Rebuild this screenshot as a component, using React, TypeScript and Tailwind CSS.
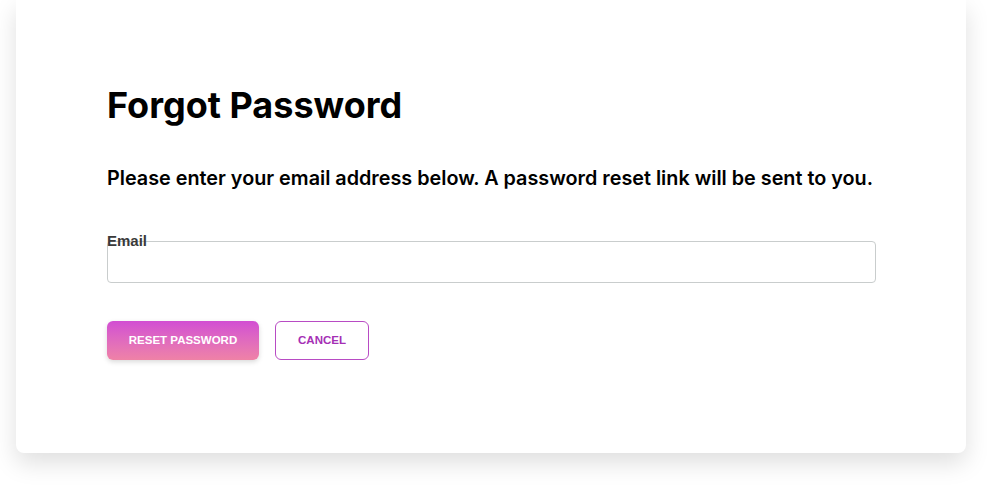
export default function App() {
  return (
    <div className="min-h-screen bg-white pl-4 pr-[21px]" style={{ fontFamily: 'Inter, "Noto Sans", sans-serif' }}>
      <div className="rounded-b-lg bg-white pl-[91px] pr-[90px] pt-[84px] pb-[93px] shadow-[0_10px_24px_rgba(0,0,0,0.13)]">
        <h1 className="text-[36px] font-bold leading-[43px] text-black">Forgot Password</h1>
        <p className="mt-[37px] whitespace-nowrap text-[19.8px] font-semibold leading-[28px] text-black">
          Please enter your email address below. A password reset link will be sent to you.
        </p>

        <div className="relative mt-[49px] h-[42px] rounded border border-[#c9cdcd]">
          <label
            className="absolute left-[-1px] top-[-9px] text-[15px] font-bold leading-4 text-[#3a3a3a]"
            style={{ fontFamily: '"Liberation Sans", Arial, sans-serif' }}
          >
            Email
          </label>
          <input className="h-full w-full bg-transparent px-3 outline-none" />
        </div>

        <div
          className="mt-[38px] flex gap-4"
          style={{ fontFamily: '"Liberation Sans", Arial, sans-serif' }}
        >
          <button className="h-[39px] w-[152px] rounded-md bg-gradient-to-b from-[#d24dd3] to-[#ef82a6] text-[11.5px] font-bold text-white shadow-[0_2px_5px_rgba(0,0,0,0.15)]">
            RESET PASSWORD
          </button>
          <button className="h-[39px] w-[94px] rounded-md border border-[#b84bc4] bg-white text-[11.5px] font-bold text-[#a52fb5]">
            CANCEL
          </button>
        </div>
      </div>
    </div>
  );
}
